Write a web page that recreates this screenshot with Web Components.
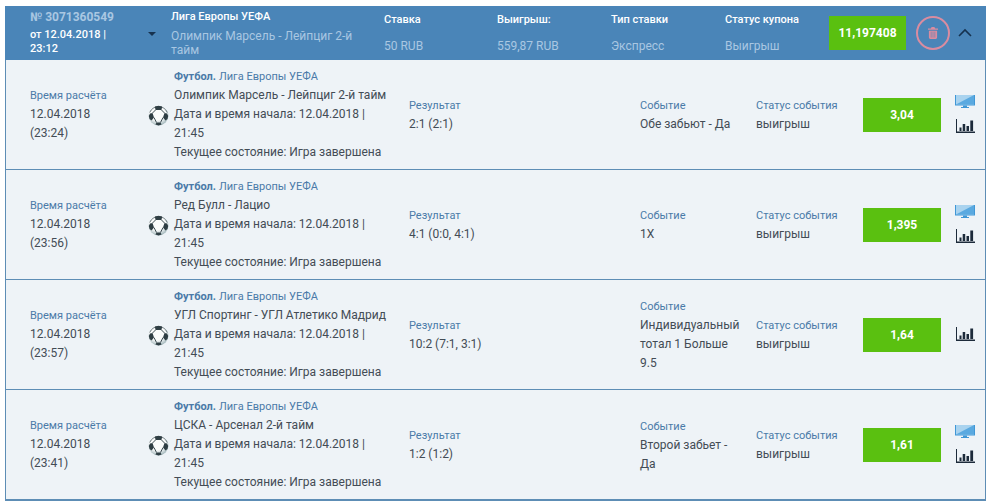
<!DOCTYPE html>
<html><head><meta charset="utf-8">
<style>html,body{margin:0;background:#fff;font-family:Roboto,"Liberation Sans",sans-serif;font-size:12px}</style>
</head><body>
<template id="coupon-t"><style>
:host{display:block;width:981px;margin:6px 0 0 5px}
</style><slot name="head"></slot><slot></slot></template>

<template id="head-t"><style>
:host{display:grid;height:54px;background:#4a85b8;grid-template-columns:25px 118px 23px 213px 113px 114px 114px 104px 77px 10px 34px 8px 14px;align-items:center;color:#fff;font-size:11px;line-height:16px}
.n{grid-column:2;align-self:start;padding-top:3px}
.num{font-weight:700;font-size:12px;color:#a9c7e2;line-height:16px}
.dt{font-weight:500;font-size:11px;line-height:14px;margin-top:3px;color:#fff}
.caret{grid-column:3;width:0;height:0;border:4px solid transparent;border-top:4px solid #16324f;border-bottom:0;margin:1px 0 0 0}
.l{grid-column:4;align-self:start;padding-top:3px;padding-right:20px}
.lg{font-weight:500;font-size:11px;line-height:16px}
.m{font-size:12px;color:#a9c7e2;line-height:14px;margin-top:4px}
.col{align-self:start;padding-top:6px}
.col b{display:block;font-weight:500;font-size:11px;line-height:16px}
.col span{display:block;font-size:12px;line-height:16px;color:#a9c7e2;margin-top:10px;white-space:nowrap}
.odd{grid-column:9;height:34px;background:#5ac010;color:#fff;font-weight:700;font-size:12px;display:flex;align-items:center;justify-content:center}
.del{grid-column:11;width:30px;height:30px;border:2px solid #d98ca0;border-radius:50%;display:flex;align-items:center;justify-content:center}
.up{grid-column:13;display:flex;margin-top:-2px}
</style>
<div class="n"><div class="num">№ 3071360549</div><div class="dt">от 12.04.2018 |<br>23:12</div></div>
<div class="caret"></div>
<div class="l"><div class="lg">Лига Европы УЕФА</div><div class="m">Олимпик Марсель - Лейпциг 2-й тайм</div></div>
<div class="col"><b>Ставка</b><span>50 RUB</span></div>
<div class="col"><b>Выигрыш:</b><span>559,87 RUB</span></div>
<div class="col"><b>Тип ставки</b><span>Экспресс</span></div>
<div class="col"><b>Статус купона</b><span>Выигрыш</span></div>
<div class="odd">11,197408</div>
<div class="del"><svg width="10" height="12" viewBox="0 0 11 13"><path fill="#d98ca0" d="M4 0h3l1 1.500h3V3H0V1.500h3zM1 4h9v7.500a1.500 1.500 0 0 1-1.500 1.500h-6A1.500 1.500 0 0 1 1 11.500z"/><path stroke="#4a85b8" stroke-width=".6" d="M3.500 5v6.500M5.500 5v6.500M7.500 5v6.500"/></svg></div>
<div class="up"><svg width="14" height="9" viewBox="0 0 14 9"><path d="M1 8l6-6 6 6" fill="none" stroke="#16324f" stroke-width="1.600"/></svg></div>
</template>

<template id="row-t"><style>
:host{display:grid;box-sizing:border-box;height:110px;background:#eef3f7;border:1px solid #5d8db5;border-top:0;grid-template-columns:24px 118px 26px 235px 231px 116px 107px 78px 14px 20px;align-items:center;color:#434c55;font-size:12px;line-height:19px}
:host([last]){height:111px;border-bottom-width:2px}
.lb{color:#4a7aa8;font-size:11px}
.t{grid-column:2}.ball{grid-column:3;display:flex;margin:2px 0 0 0}
.info{grid-column:4;margin-top:-1px}
.info b{color:#4a7aa8;font-size:11px;font-weight:700}
.info i{font-style:normal;color:#4a7aa8;font-size:11px}
.r{grid-column:5;margin-top:1px}.e{grid-column:6;margin-top:1px;padding-right:14px}.s{grid-column:7;margin-top:1px}
.odd{grid-column:8;height:34px;background:#5ac010;color:#fff;font-weight:700;font-size:12px;display:flex;align-items:center;justify-content:center;margin-top:1px}
.ic{grid-column:10;display:flex;flex-direction:column;gap:10px;align-items:center;margin-top:-1px}
:host([nomon]) #mon{display:none}
</style>
<div class="t"><div class="lb">Время расчёта</div><div><slot name="date"></slot></div><div><slot name="time"></slot></div></div>
<div class="ball"><svg width="21" height="21" viewBox="0 0 21 21"><defs><radialGradient id="g" cx=".45" cy=".35" r=".7"><stop offset=".55" stop-color="#fbfcfc"/><stop offset="1" stop-color="#8fa8ad"/></radialGradient></defs><circle cx="10.500" cy="10.500" r="10" fill="url(#g)"/><path fill="none" stroke="#47585e" stroke-width=".8" d="M1.700 7.500A9.600 9.600 0 0 1 19.300 7.500"/><path fill="#2f3e44" d="M6.800 1.600 10.500.8 14.200 1.600 13.500 5H7.500zM.8 11 2 8.500 4.500 8 6 12.500 3.500 15.500 1.500 14zM20.200 11 19 8.500 16.500 8 15 12.500 17.500 15.500 19.500 14zM8.500 17.500h4l1 2-3 1-3-1z"/><path fill="none" stroke="#3d4c52" stroke-width="1" d="M7.500 5 4.500 8M13.500 5l3 3M6 12.500 8.500 17.500M15 12.500 12.500 17.500"/></svg></div>
<div class="info"><div><b>Футбол.</b> <i><slot name="league"></slot></i></div><div><slot name="match"></slot></div><div>Дата и время начала: 12.04.2018 |<br>21:45</div><div>Текущее состояние: Игра завершена</div></div>
<div class="r"><div class="lb">Результат</div><div><slot name="res"></slot></div></div>
<div class="e"><div class="lb">Событие</div><div><slot name="ev"></slot></div></div>
<div class="s"><div class="lb">Статус события</div><div>выигрыш</div></div>
<div class="odd"><slot name="odd"></slot></div>
<div class="ic"><svg id="mon" width="20" height="14" viewBox="0 0 20 14"><path fill="#3f97d6" d="M0 0h20v10.500H0z"/><path fill="#a9d3ef" d="M1 0h18v9.500H1z"/><path fill="#5aa9e0" d="M1 9.500 19 0v9.500z"/><path fill="#3f97d6" d="M8 10.500h4V12h2v1H6v-1h2z"/></svg><svg width="19" height="14" viewBox="0 0 19 14"><path fill="#1c2a3a" d="M0 0h1v12.500h18V14H0zM3.500 8.500h2V12h-2zM6.700 5h2.500v7H6.700zM10.500 7h2.500v5h-2.500zM14.300 1.500h2.800V12h-2.800z"/></svg></div>
</template>

<script>
function def(name,tid){customElements.define(name,class extends HTMLElement{constructor(){super();this.attachShadow({mode:'open'}).appendChild(document.getElementById(tid).content.cloneNode(true));}});}
def('bet-coupon','coupon-t');def('coupon-head','head-t');def('event-row','row-t');
</script>

<bet-coupon>
<coupon-head slot="head"></coupon-head>
<event-row><span slot="date">12.04.2018</span><span slot="time">(23:24)</span><span slot="league">Лига Европы УЕФА</span><span slot="match">Олимпик Марсель - Лейпциг 2-й тайм</span><span slot="res">2:1 (2:1)</span><span slot="ev">Обе забьют - Да</span><span slot="odd">3,04</span></event-row>
<event-row><span slot="date">12.04.2018</span><span slot="time">(23:56)</span><span slot="league">Лига Европы УЕФА</span><span slot="match">Ред Булл - Лацио</span><span slot="res">4:1 (0:0, 4:1)</span><span slot="ev">1Х</span><span slot="odd">1,395</span></event-row>
<event-row nomon><span slot="date">12.04.2018</span><span slot="time">(23:57)</span><span slot="league">Лига Европы УЕФА</span><span slot="match">УГЛ Спортинг - УГЛ Атлетико Мадрид</span><span slot="res">10:2 (7:1, 3:1)</span><span slot="ev">Индивидуальный тотал 1 Больше 9.5</span><span slot="odd">1,64</span></event-row>
<event-row last><span slot="date">12.04.2018</span><span slot="time">(23:41)</span><span slot="league">Лига Европы УЕФА</span><span slot="match">ЦСКА - Арсенал 2-й тайм</span><span slot="res">1:2 (1:2)</span><span slot="ev">Второй забьет - Да</span><span slot="odd">1,61</span></event-row>
</bet-coupon>
</body></html>
